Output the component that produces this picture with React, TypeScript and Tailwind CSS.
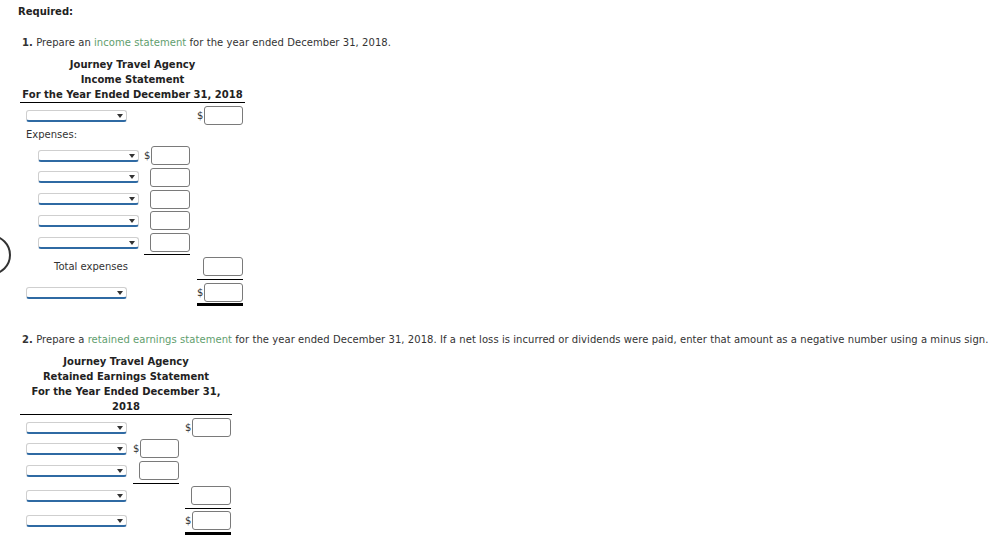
import React from "react";

const FONT = { fontFamily: '"DejaVu Sans", Verdana, sans-serif' };

function Sel({ w = 101 }: { w?: number }) {
  return (
    <div
      className="relative h-[12px] rounded-[3px] border border-[#cfcfcf] border-b-2 border-b-[#2f6aa3] bg-white"
      style={{ width: w }}
    >
      <div className="absolute right-[3px] top-[3px] h-0 w-0 border-l-[3px] border-r-[3px] border-t-[4px] border-l-transparent border-r-transparent border-t-[#333]" />
    </div>
  );
}

function Amt({ dollar = false }: { dollar?: boolean }) {
  return (
    <div className="flex h-[19px] w-[46px] items-center justify-end">
      {dollar && <span className="mr-[1px] text-[10px] leading-none text-[#333]">$</span>}
      <div className="h-[19px] w-[40px] rounded-[3px] border border-[#7a7a7a] bg-white" />
    </div>
  );
}

export default function App() {
  return (
    <div className="relative min-h-[549px] w-[997px] overflow-hidden bg-white text-[#333]" style={FONT}>
      <div className="absolute left-[-29px] top-[235px] h-[40px] w-[40px] rounded-full border-2 border-[#333]" />

      <div className="pl-[18px] pt-[5px]">
        <div className="h-[14px] text-[10px] font-bold leading-[14px] text-[#222]">Required:</div>
      </div>

      {/* Section 1 */}
      <div className="pl-[22px] pt-[17px]">
        <div className="h-[14px] text-[10px] leading-[14px] tracking-[0.06px]">
          <span className="font-bold">1.</span> Prepare an <span className="text-[#5f9e6e]">income statement</span> for the year ended December 31, 2018.
        </div>
      </div>
      <div className="ml-[20px] mt-[7px] w-[225px]">
        <div className="border-b border-black text-center text-[10px] font-bold leading-[15px] text-[#222]">
          <div>Journey Travel Agency</div>
          <div>Income Statement</div>
          <div>For the Year Ended December 31, 2018</div>
        </div>
        {/* Row A */}
        <div className="mt-[3px] flex h-[19px] items-center">
          <div className="w-[124px] pl-[6px]"><Sel /></div>
          <div className="w-[46px]" />
          <div className="ml-[7px]"><Amt dollar /></div>
        </div>
        <div className="mt-[4px] h-[12px] pl-[6px] text-[10px] leading-[12px]">Expenses:</div>
        <div className="mt-[5px] flex flex-col gap-[2.75px]">
          {[0, 1, 2, 3, 4].map((i) => (
            <div key={i} className="flex h-[19px] items-center">
              <div className="w-[124px] pl-[18px]"><Sel /></div>
              <Amt dollar={i === 0} />
            </div>
          ))}
        </div>
        <div className="ml-[124px] mt-[2px] w-[46px] border-b border-black" />
        <div className="mt-[2px] flex h-[19px] items-center">
          <div className="w-[124px] pl-[34px] text-[10px] leading-[12px]">Total expenses</div>
          <div className="w-[46px]" />
          <div className="ml-[7px]"><Amt /></div>
        </div>
        <div className="ml-[177px] mt-[3px] w-[46px] border-b border-black" />
        <div className="mt-[3px] flex h-[19px] items-center">
          <div className="w-[124px] pl-[6px]"><Sel /></div>
          <div className="w-[46px]" />
          <div className="ml-[7px]"><Amt dollar /></div>
        </div>
        <div className="ml-[177px] mt-[1px] w-[46px] border-b-[3px] border-black" />
      </div>

      {/* Section 2 */}
      <div className="pl-[22px] pt-[27px]">
        <div className="h-[14px] text-[10px] leading-[14px] tracking-[0.06px]">
          <span className="font-bold">2.</span> Prepare a <span className="text-[#5f9e6e]">retained earnings statement</span> for the year ended December 31, 2018. If a net loss is incurred or dividends were paid, enter that amount as a negative number using a minus sign.
        </div>
      </div>
      <div className="ml-[20px] mt-[7px] w-[212px]">
        <div className="mx-auto w-[200px] text-center text-[10px] font-bold leading-[15px] text-[#222]">
          <div>Journey Travel Agency</div>
          <div>Retained Earnings Statement</div>
          <div>For the Year Ended December 31, 2018</div>
        </div>
        <div className="border-b border-black" />
        <div className="mt-[3px] flex h-[19px] items-center">
          <div className="w-[113px] pl-[6px]"><Sel /></div>
          <div className="w-[46px]" />
          <div className="ml-[6px]"><Amt dollar /></div>
        </div>
        <div className="mt-[2px] flex h-[19px] items-center">
          <div className="w-[113px] pl-[6px]"><Sel /></div>
          <Amt dollar />
        </div>
        <div className="mt-[3px] flex h-[19px] items-center">
          <div className="w-[113px] pl-[6px]"><Sel /></div>
          <Amt />
        </div>
        <div className="ml-[113px] mt-[3px] w-[46px] border-b border-black" />
        <div className="mt-[2px] flex h-[19px] items-center">
          <div className="w-[113px] pl-[6px]"><Sel /></div>
          <div className="w-[46px]" />
          <div className="ml-[6px]"><Amt /></div>
        </div>
        <div className="ml-[165px] mt-[3px] w-[46px] border-b border-black" />
        <div className="mt-[2px] flex h-[19px] items-center">
          <div className="w-[113px] pl-[6px]"><Sel /></div>
          <div className="w-[46px]" />
          <div className="ml-[6px]"><Amt dollar /></div>
        </div>
        <div className="ml-[165px] mt-[2px] w-[46px] border-b-[3px] border-black" />
      </div>
    </div>
  );
}
